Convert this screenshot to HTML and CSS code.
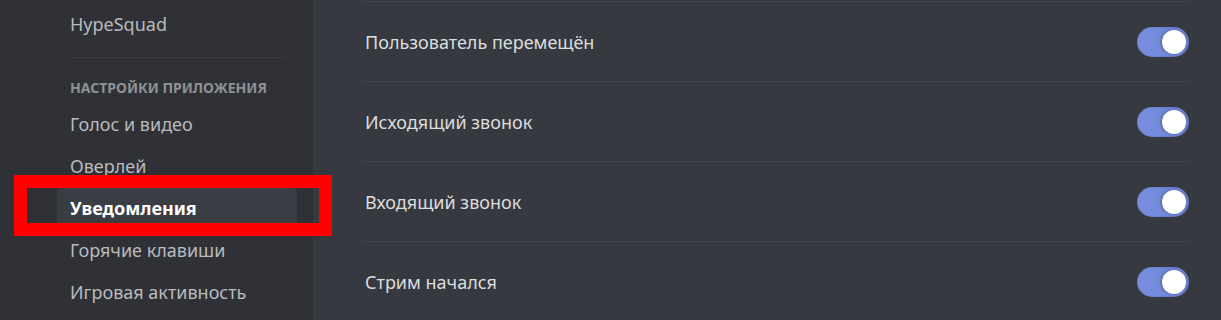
FILE: index.html
```html
<!DOCTYPE html>
<html lang="ru">
<head>
<meta charset="utf-8">
<title>Настройки</title>
<link rel="stylesheet" href="styles.css">
</head>
<body>
<div class="app">
  <nav class="sidebar">
    <div class="item">HypeSquad</div>
    <div class="divider"></div>
    <div class="header">Настройки приложения</div>
    <div class="item">Голос и видео</div>
    <div class="item">Оверлей</div>
    <div class="item selected">Уведомления</div>
    <div class="item">Горячие клавиши</div>
    <div class="item">Игровая активность</div>
    <div class="highlight"></div>
  </nav>
  <main class="content">
    <div class="row"><span class="label">Пользователь перемещён</span><span class="toggle"><span class="knob"></span></span></div>
    <div class="row"><span class="label">Исходящий звонок</span><span class="toggle"><span class="knob"></span></span></div>
    <div class="row"><span class="label">Входящий звонок</span><span class="toggle"><span class="knob"></span></span></div>
    <div class="row"><span class="label">Стрим начался</span><span class="toggle"><span class="knob"></span></span></div>
  </main>
</div>
</body>
</html>
```
FILE: styles.css
```css
html, body {
  margin: 0;
  padding: 0;
  height: 100%;
  background: #36393f;
  overflow: hidden;
}
.app {
  display: flex;
  height: 320px;
  font-family: "Noto Sans", "Open Sans", sans-serif;
}
.sidebar {
  position: relative;
  width: 313px;
  flex: none;
  box-sizing: border-box;
  padding: 4px 16px 0 57px;
  background: #2f3136;
  display: flex;
  flex-direction: column;
}
.item {
  height: 40px;
  margin-bottom: 2px;
  padding-left: 13px;
  display: flex;
  align-items: center;
  font-size: 18px;
  color: #b9bbbe;
  border-radius: 4px;
  white-space: nowrap;
}
.item.selected {
  background: #3a3d43;
  color: #ffffff;
  font-weight: 700;
}
.divider {
  height: 1px;
  background: #383b41;
  margin: 11px 10px 0 13px;
}
.header {
  height: 30px;
  margin-top: 14px;
  margin-bottom: 2px;
  padding-left: 13px;
  display: flex;
  align-items: center;
  font-size: 14px;
  font-weight: 700;
  text-transform: uppercase;
  color: #8e9297;
  white-space: nowrap;
}
.highlight {
  position: absolute;
  left: 14px;
  top: 175px;
  width: 292px;
  height: 35px;
  border: 13px solid #ff0000;
  pointer-events: none;
}
.content {
  flex: 1;
  padding: 1px 31px 0 50px;
  display: flex;
  flex-direction: column;
}
.row {
  height: 79px;
  flex: none;
  border-top: 1px solid #42454b;
  display: flex;
  align-items: center;
  justify-content: space-between;
  padding-left: 2px;
}
.label {
  font-size: 18px;
  color: #dcddde;
}
.toggle {
  width: 52px;
  height: 30px;
  border-radius: 15px;
  background: linear-gradient(90deg, #7a8ee0 0%, #7189da 55%, #6a80d0 100%);
  box-shadow: inset 0 0 2px rgba(0,0,0,0.25);
  display: flex;
  align-items: center;
  justify-content: flex-end;
  padding-right: 3px;
  box-sizing: border-box;
  margin-right: 1px;
}
.knob {
  width: 24px;
  height: 24px;
  border-radius: 50%;
  background: #ffffff;
  box-shadow: -1px 0 3px rgba(0,0,0,0.3);
}
```
